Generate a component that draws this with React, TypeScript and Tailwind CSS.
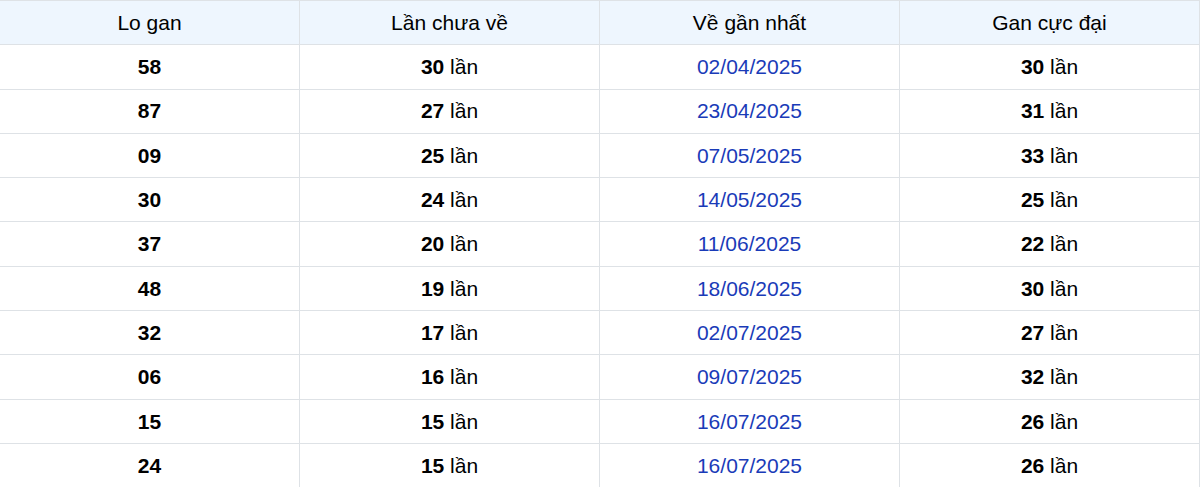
const rows = [
  ["58", "30", "02/04/2025", "30"],
  ["87", "27", "23/04/2025", "31"],
  ["09", "25", "07/05/2025", "33"],
  ["30", "24", "14/05/2025", "25"],
  ["37", "20", "11/06/2025", "22"],
  ["48", "19", "18/06/2025", "30"],
  ["32", "17", "02/07/2025", "27"],
  ["06", "16", "09/07/2025", "32"],
  ["15", "15", "16/07/2025", "26"],
  ["24", "15", "16/07/2025", "26"],
]

const cell = "h-[44.3px] border-r border-b border-[#dee2e6] flex items-center justify-center"

export default function App() {
  return (
    <div className="w-[1200px] bg-white text-[21px] text-black font-['Liberation_Sans',Arial,sans-serif]">
      <div className="grid grid-cols-4 border-t border-[#dee2e6]">
        {["Lo gan", "Lần chưa về", "Về gần nhất", "Gan cực đại"].map((h) => (
          <div key={h} className={`${cell} bg-[#eef6fe] h-[43.3px]`}>
            {h}
          </div>
        ))}
        {rows.map(([lo, chua, ngay, cuc], i) => (
          <div key={i} className="contents">
            <div className={`${cell} font-bold`}>{lo}</div>
            <div className={cell}>
              <span className="font-bold">{chua}</span>&nbsp;lần
            </div>
            <div className={`${cell} text-[#1a3bb8]`}>{ngay}</div>
            <div className={cell}>
              <span className="font-bold">{cuc}</span>&nbsp;lần
            </div>
          </div>
        ))}
      </div>
    </div>
  )
}
